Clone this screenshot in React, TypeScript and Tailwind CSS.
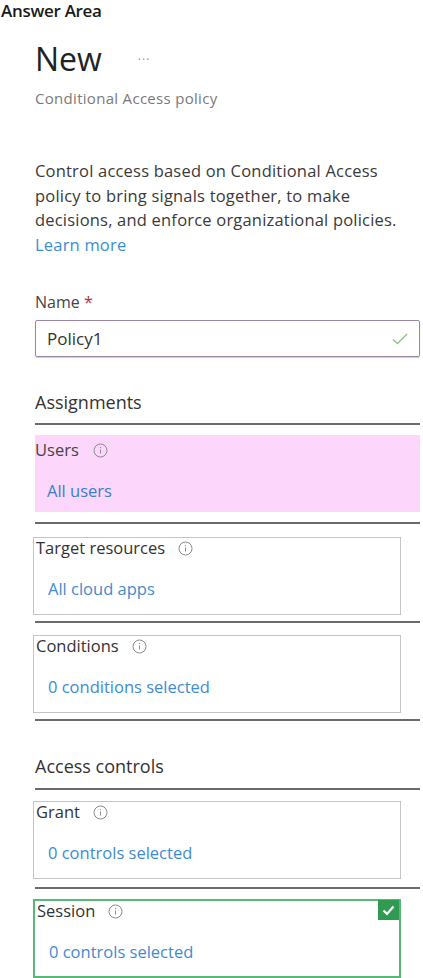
import { type ReactNode } from 'react';

function InfoIcon() {
  return (
    <svg width="15" height="15" viewBox="0 0 15 15" className="inline-block">
      <circle cx="7.5" cy="7.5" r="6.5" fill="none" stroke="#8c8c8c" strokeWidth="1" />
      <line x1="7.5" y1="6.5" x2="7.5" y2="10.5" stroke="#8c8c8c" strokeWidth="1" />
      <circle cx="7.5" cy="4.6" r="0.7" fill="#8c8c8c" />
    </svg>
  );
}

function Divider() {
  return <div className="h-[2px] w-[385px] bg-[#6b6b6b]" />;
}

interface SectionProps {
  label: string;
  value: string;
  variant?: 'box' | 'pink' | 'green';
  children?: ReactNode;
}

function Section({ label, value, variant = 'box', children }: SectionProps) {
  if (variant === 'pink') {
    return (
      <div className="w-[385px] h-[77px] bg-[#fcd6fb] pt-[5px]">
        <div className="flex items-center gap-[14px] text-[16.5px] leading-[20px] text-[#444]">
          {label} <InfoIcon />
        </div>
        <div className="mt-[21px] pl-[12px] text-[16.5px] leading-[20px] text-[#3a7fc8]">{value}</div>
      </div>
    );
  }
  const border =
    variant === 'green' ? 'border-2 border-[#57b878] h-[79px]' : 'border border-[#c4c4c4] h-[78px]';
  return (
    <div className={`relative -ml-[2px] w-[368px] ${border} pl-[2px]`}>
      <div className="flex items-center gap-[13px] text-[16.5px] leading-[20px] text-[#333]">
        {label} <InfoIcon />
      </div>
      <div className="mt-[21px] pl-[12px] text-[16.5px] leading-[20px] text-[#3f8bd0]">{value}</div>
      {children}
    </div>
  );
}

export default function App() {
  return (
    <div
      className="w-[423px] h-[978px] bg-white overflow-hidden"
      style={{ fontFamily: '"Open Sans", "Noto Sans", sans-serif' }}
    >
      <div className="pt-[1px] pl-[1px] text-[17px] font-semibold text-[#1a1a1a] tracking-[-0.3px] leading-[20px]">
        Answer Area
      </div>

      <div className="pl-[35px]">
        <div className="mt-[18px] flex items-end gap-[36px]">
          <h1 className="text-[32px] leading-[40px] text-[#222]">New</h1>
          <span className="mb-[10px] text-[12px] text-[#999] tracking-[1px]">···</span>
        </div>
        <div className="mt-[9px] text-[15px] leading-[20px] tracking-[0.3px] text-[#7a7a7a]">
          Conditional Access policy
        </div>

        <p className="mt-[51px] text-[16.5px] leading-[24.5px] tracking-[0.2px] text-[#3a3a3a]">
          Control access based on Conditional Access
          <br />
          policy to bring signals together, to make
          <br />
          decisions, and enforce organizational policies.
          <br />
          <span className="text-[#3c8ed4]">Learn more</span>
        </p>

        <div className="mt-[35px] text-[16px] leading-[20px] text-[#444]">
          Name <span className="text-[#b0313a]">*</span>
        </div>
        <div className="mt-[8px] w-[385px] h-[37px] border border-[#9a86a6] rounded-[2px] flex items-center justify-between px-[11px] shadow-[0_1px_1px_rgba(0,0,0,0.2)]">
          <span className="text-[17px] text-[#333]">Policy1</span>
          <svg width="16" height="12" viewBox="0 0 16 12">
            <path d="M1 6.5 L5.5 10.5 L15 1" fill="none" stroke="#8bbf8b" strokeWidth="1.3" />
          </svg>
        </div>

        <div className="mt-[33px] text-[18px] text-[#333] leading-[24px]">Assignments</div>
        <div className="mt-[9px]">
          <Divider />
        </div>
        <div className="mt-[10px]">
          <Section label="Users" value="All users" variant="pink" />
        </div>
        <div className="mt-[10px]">
          <Divider />
        </div>
        <div className="mt-[13px]">
          <Section label="Target resources" value="All cloud apps" />
        </div>
        <div className="mt-[6px]">
          <Divider />
        </div>
        <div className="mt-[12px]">
          <Section label="Conditions" value="0 conditions selected" />
        </div>
        <div className="mt-[6px]">
          <Divider />
        </div>

        <div className="mt-[33px] text-[18px] text-[#333] leading-[24px]">Access controls</div>
        <div className="mt-[10px]">
          <Divider />
        </div>
        <div className="mt-[11px]">
          <Section label="Grant" value="0 controls selected" />
        </div>
        <div className="mt-[8px]">
          <Divider />
        </div>
        <div className="mt-[10px]">
          <Section label="Session" value="0 controls selected" variant="green">
            <div className="absolute right-[0px] top-[-1px] w-[21px] h-[20px] bg-[#2f9a50] flex items-center justify-center">
              <svg width="13" height="11" viewBox="0 0 13 11">
                <path d="M1.5 5.5 L5 9 L11.5 1.5" fill="none" stroke="white" strokeWidth="2.2" />
              </svg>
            </div>
          </Section>
        </div>
      </div>
    </div>
  );
}
